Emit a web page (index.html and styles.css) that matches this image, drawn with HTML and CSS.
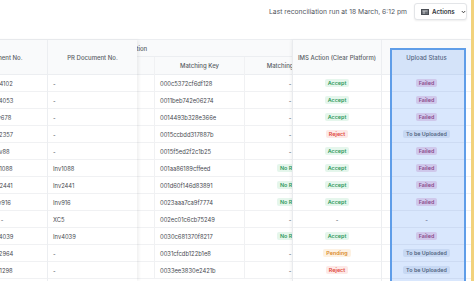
FILE: index.html
```html
<!DOCTYPE html>
<html>
<head>
<meta charset="utf-8">
<link rel="stylesheet" href="styles.css">
</head>
<body>
<div class="page">
  <div class="topbar">
    <span class="last-run">Last reconciliation run at 18 March, 6:12 pm</span>
    <button class="actions-btn">
      <svg class="ic-table" width="8" height="6" viewBox="0 0 8 6"><rect x="0.5" y="0.5" width="7" height="5" fill="#6b6f76" stroke="#4a4e55" stroke-width="1"/><line x1="1.5" y1="2" x2="6.5" y2="2" stroke="#d8dade" stroke-width="0.8"/><line x1="3" y1="2" x2="3" y2="5" stroke="#d8dade" stroke-width="0.8"/></svg>
      <span>Actions</span>
      <svg class="ic-chev" width="5" height="4" viewBox="0 0 5 4"><path d="M0.8 1 L2.5 2.8 L4.2 1" fill="none" stroke="#333" stroke-width="0.9"/></svg>
    </button>
  </div>

  <div class="grid">
    <div class="pane pane-left">
      <div class="col col-doc">
        <div class="th">Document No.</div>
        <div class="td c">Inv4102</div><div class="td c">Inv4053</div><div class="td c">Inv678</div><div class="td c">Inv2357</div><div class="td c">Inv88</div><div class="td c">Inv1088</div><div class="td c">Inv2441</div><div class="td c">Inv916</div><div class="td c">-</div><div class="td c">Inv4039</div><div class="td c">Inv2964</div><div class="td c">Inv1298</div>
      </div>
      <div class="col col-pr">
        <div class="th">PR Document No.</div>
        <div class="td">-</div><div class="td">-</div><div class="td">-</div><div class="td">-</div><div class="td">-</div><div class="td">Inv1088</div><div class="td">Inv2441</div><div class="td">Inv916</div><div class="td">XC5</div><div class="td">Inv4039</div><div class="td">-</div><div class="td">-</div>
      </div>
    </div>

    <div class="pane pane-mid">
      <div class="group-th"><span class="group-label">Reconciliation</span></div>
      <div class="mid-cols">
        <div class="col col-x">
          <div class="sub-th"></div>
          <div class="td"></div><div class="td"></div><div class="td"></div><div class="td"></div><div class="td"></div><div class="td"></div><div class="td"></div><div class="td"></div><div class="td"></div><div class="td"></div><div class="td"></div><div class="td"></div>
        </div>
        <div class="col col-key">
          <div class="sub-th">Matching Key</div>
          <div class="td">000c5372cf6df128</div><div class="td">0011beb742e06274</div><div class="td">0014493b328e366e</div><div class="td">0015ccbdd317887b</div><div class="td">0015f5ed2f2c1b25</div><div class="td">001aa86189cffeed</div><div class="td">001d60f146d83891</div><div class="td">0023aaa7ca9f7774</div><div class="td">002ec01c6cb75249</div><div class="td">0030c681370f8217</div><div class="td">0031cfcdb122b1e8</div><div class="td">0033ee3830e2421b</div>
        </div>
        <div class="col col-match">
          <div class="sub-th">Matching Status</div>
          <div class="td c">-</div><div class="td c">-</div><div class="td c">-</div><div class="td c">-</div><div class="td c">-</div><div class="td c"><span class="badge green">No Rule</span></div><div class="td c"><span class="badge green">No Rule</span></div><div class="td c"><span class="badge green">No Rule</span></div><div class="td c">-</div><div class="td c"><span class="badge green">No Rule</span></div><div class="td c">-</div><div class="td c">-</div>
        </div>
      </div>
    </div>

    <div class="pane pane-right">
      <div class="col col-ims">
        <div class="th">IMS Action (Clear Platform)</div>
        <div class="td c"><span class="badge green">Accept</span></div><div class="td c"><span class="badge green">Accept</span></div><div class="td c"><span class="badge green">Accept</span></div><div class="td c"><span class="badge red">Reject</span></div><div class="td c"><span class="badge green">Accept</span></div><div class="td c"><span class="badge green">Accept</span></div><div class="td c"><span class="badge green">Accept</span></div><div class="td c"><span class="badge green">Accept</span></div><div class="td c">-</div><div class="td c"><span class="badge green">Accept</span></div><div class="td c"><span class="badge orange">Pending</span></div><div class="td c"><span class="badge red">Reject</span></div>
      </div>
      <div class="col col-upload">
        <div class="th">Upload Status</div>
        <div class="td c"><span class="badge pink">Failed</span></div><div class="td c"><span class="badge pink">Failed</span></div><div class="td c"><span class="badge pink">Failed</span></div><div class="td c"><span class="badge grey">To be Uploaded</span></div><div class="td c"><span class="badge pink">Failed</span></div><div class="td c"><span class="badge pink">Failed</span></div><div class="td c"><span class="badge pink">Failed</span></div><div class="td c"><span class="badge pink">Failed</span></div><div class="td c">-</div><div class="td c"><span class="badge pink">Failed</span></div><div class="td c"><span class="badge grey">To be Uploaded</span></div><div class="td c"><span class="badge grey">To be Uploaded</span></div>
      </div>
    </div>

    <div class="highlight"></div>
  </div>
</div>
</body>
</html>
```

FILE: styles.css
```css
* { box-sizing: border-box; }
html, body { margin: 0; padding: 0; }
body {
  width: 474px;
  height: 281px;
  overflow: hidden;
  background: #fff;
  font-family: Inter, "Noto Sans", sans-serif;
  color: #444;
}
.page {
  width: 474px;
  height: 281px;
  border-right: 3px solid #f2d27c;
  overflow: hidden;
  display: flex;
  flex-direction: column;
}
.topbar {
  height: 40px;
  flex: none;
  display: flex;
  justify-content: flex-end;
  align-items: flex-start;
  gap: 7px;
  padding: 3px 4px 0 0;
  background: #fff;
  border-bottom: 1px solid #eceef1;
}
.last-run {
  font-size: 6.75px;
  line-height: 17px;
  color: #54585f;
}
.actions-btn {
  height: 17px;
  width: 53px;
  display: flex;
  align-items: center;
  gap: 3px;
  padding: 0 0 0 6px;
  border: 1px solid #e3e5e8;
  border-radius: 3px;
  background: #fff;
  box-shadow: 0 1px 2px rgba(0,0,0,0.07);
  font-family: Inter, sans-serif;
  font-size: 6.2px;
  font-weight: 600;
  color: #30343a;
}
.ic-chev { margin-left: 3px; }

.grid {
  position: relative;
  flex: 1;
  display: flex;
  margin-left: -43px;
}
.pane { display: flex; flex: none; background: #fff; }
.pane-left {
  position: relative;
  z-index: 2;
  box-shadow: 2px 0 3px rgba(0,0,0,0.06);
}
.pane-mid {
  width: 155px;
  overflow: hidden;
  flex-direction: column;
  z-index: 1;
}
.pane-right {
  position: relative;
  z-index: 2;
  border-left: 1px solid #e9ebee;
  box-shadow: -1px 0 3px rgba(0,0,0,0.05);
}
.col { display: flex; flex-direction: column; flex: none; }
.col-doc { width: 91px; border-right: 1px solid #eceef1; }
.col-pr { width: 89px; }
.col-x { width: 18px; border-right: 1px solid #f0f1f3; }
.col-key { width: 90px; border-right: 1px solid #f0f1f3; }
.col-match { width: 90px; }
.col-ims { width: 89px; border-right: 1px solid #eceef1; }
.col-upload { width: 89px; }

.th {
  height: 35px;
  display: flex;
  align-items: center;
  justify-content: center;
  background: #f9fafb;
  border-bottom: 1px solid #eceef1;
  font-size: 6px;
  font-weight: 500;
  color: #5a5e65;
  white-space: nowrap;
}
.group-th {
  height: 17px;
  flex: none;
  background: #f9fafb;
  border-bottom: 1px solid #eceef1;
  display: flex;
  align-items: center;
  white-space: nowrap;
  font-size: 6px;
  font-weight: 500;
  color: #5a5e65;
}
.group-label { margin-left: -30px; }
.mid-cols { display: flex; }
.sub-th {
  height: 18px;
  display: flex;
  align-items: center;
  justify-content: center;
  background: #f9fafb;
  border-bottom: 1px solid #eceef1;
  font-size: 6px;
  font-weight: 500;
  color: #5a5e65;
  white-space: nowrap;
}
.td {
  height: 17px;
  display: flex;
  align-items: center;
  padding-left: 5px;
  border-bottom: 1px solid #f0f1f3;
  font-size: 5.8px;
  color: #474a50;
  white-space: nowrap;
}
.td.c { justify-content: center; padding-left: 0; }

.badge {
  display: inline-block;
  padding: 1px 3px;
  border-radius: 2px;
  font-size: 5.4px;
  font-weight: 600;
  line-height: 6.5px;
}
.badge.green { color: #2f9a5c; background: #e5f6ec; }
.badge.red { color: #e04a3c; background: #fde9e7; }
.badge.orange { color: #d98a2b; background: #fdf1e2; }
.badge.pink { color: #9c3a72; background: #f3d9e9; }
.badge.grey { color: #5a5e66; background: #e9edf3; }

.highlight {
  position: absolute;
  left: 433px;
  top: 8px;
  width: 76px;
  height: 260px;
  border: 2px solid #5f9de8;
  background: rgba(66,133,244,0.2);
  z-index: 3;
}
```
